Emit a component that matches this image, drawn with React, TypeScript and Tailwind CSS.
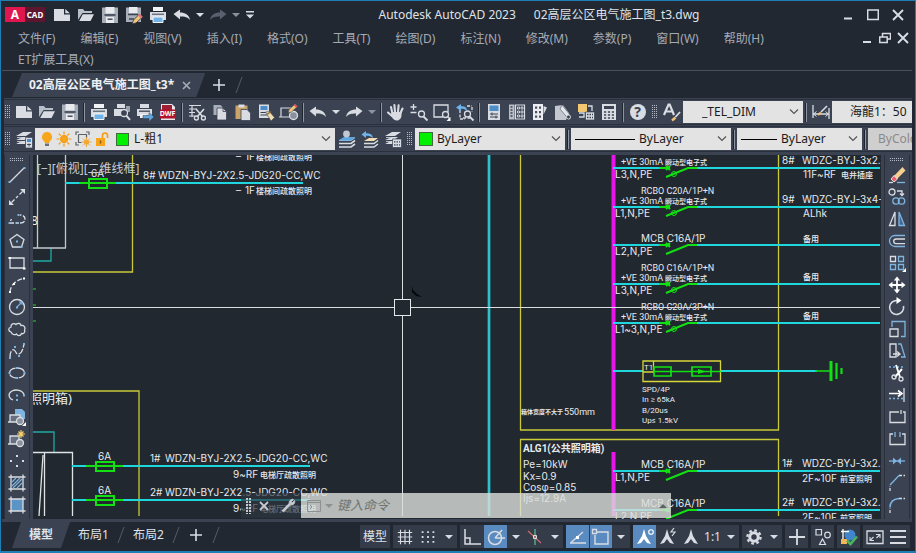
import React, { useState } from 'react';

type IconProps = { children: React.ReactNode; size?: number };

const Icon: React.FC<IconProps> = ({ children, size = 20 }) => (
  <svg width={size} height={size} viewBox="0 0 20 20" fill="none" stroke="#d9dde3" strokeWidth="1.3" className="shrink-0" aria-hidden="true">
    {children}
  </svg>
);

const L = '#d9dde3';
const B = '#7fb4e0';
const BG = '#3b4352';

/* ---------- file and edit icons ---------- */

const newIcon = <Icon><path d="M2 4h10v5.5h6V16H2z" fill={L} stroke="none" /><path d="M13.3 4l4.5 4.3h-4.5z" fill={L} stroke="none" /></Icon>;
const openIcon = (
  <Icon>
    <path d="M2 15V4h5l1.5 2H16v2H6.5z" fill="#b9bfc8" stroke="none" />
    <path d="M6.8 9.2H18L14.5 16H3.2z" fill={L} stroke="none" />
  </Icon>
);
const saveIcon = (
  <Icon>
    <path d="M2 2.5h16V18H2z" fill="#a9afb8" stroke="none" />
    <path d="M5.5 2h9v6.5h-9zM6 12h8v6H6z" fill="#e8eaee" stroke="none" />
    <path d="M4.5 10h11" stroke={BG} strokeWidth="1.6" />
    <path d="M7.6 14.2h5" stroke={BG} strokeWidth="1.4" />
  </Icon>
);
const saveAsIcon = (
  <Icon>
    <path d="M2 2.5h15V17H2z" fill="#a9afb8" stroke="none" />
    <path d="M5 2h8.5v6H5z" fill="#e8eaee" stroke="none" />
    <path d="M4 9.5h10M5 14h5" stroke={BG} strokeWidth="1.6" />
    <path d="M8 19l1.5-4L15 9.5l3 3L12 18z" fill="#f0c27a" stroke="#2a303b" strokeWidth=".8" />
    <path d="M14 10.4l1.8-1.7 3 3-1.7 1.7z" fill="#e8707a" stroke="none" />
  </Icon>
);
const printIcon = (
  <Icon>
    <path d="M5 2h10v4H5z" fill="#f1f3f5" stroke="none" />
    <path d="M2 7h16v8H2z" fill={L} stroke="none" />
    <path d="M4 9.2h12" stroke={BG} strokeWidth="1" />
    <path d="M5 12h10v5.5H5z" fill="#6fb3ea" stroke="#f1f3f5" strokeWidth="1" />
  </Icon>
);
const previewIcon = (
  <Icon>
    <path d="M2 7h13v7H2zM5 2h8v4H5z" fill={L} stroke="none" />
    <path d="M14 4h4v6h-4z" fill="#9aa1ac" stroke="none" />
    <circle cx="12" cy="11" r="3.5" fill={BG} stroke={L} />
    <path d="M14.5 13.8l3.5 4" strokeWidth="2" />
  </Icon>
);
const publishIcon = (
  <Icon>
    <path d="M5 2h9v4H5zM2 7h15v7H2z" fill={L} stroke="none" />
    <path d="M4 9.2h11" stroke={BG} />
    <path d="M5 12h6v4H5z" fill="#f1f3f5" stroke="none" />
    <path d="M8 13.5h6v-3l5 4.5-5 4.5v-3H8z" fill="#5da6e0" stroke={BG} strokeWidth=".5" />
  </Icon>
);
const dwfIcon = (
  <span className="relative flex h-5 w-5 items-center justify-center">
    <svg width="20" height="20" viewBox="0 0 20 20" aria-hidden="true">
      <path d="M3 2h11l3 3v13H3z" fill="#e6e8ec" />
      <path d="M4 3h10v5H4z" fill="#9d2035" />
      <path d="M2 7.5h16v9H2z" fill="#b3122d" />
    </svg>
    <span className="absolute inset-x-0 top-[7px] text-center text-[7px] leading-[10px] font-bold text-white">DWF</span>
  </span>
);
const cutIcon = (
  <Icon>
    <path d="M2 3.5h12M2 7h8M2 10.5h6M2 14h6M5 3v12" strokeWidth="1.2" />
    <path d="M9 7l7 8M17 7l-7 8" strokeWidth="1.6" />
    <circle cx="9.4" cy="16" r="2" /><circle cx="16.4" cy="16" r="2" />
  </Icon>
);
const copyIcon = (
  <Icon>
    <path d="M3.5 3h7l2 2v8h-9z" fill="#a9afb8" stroke="none" />
    <path d="M7 6h6l3.5 3.5V18H7z" fill={L} stroke={BG} strokeWidth=".8" />
    <path d="M13 6v3.5h3.5" stroke={BG} strokeWidth=".8" />
  </Icon>
);
const pasteIcon = (
  <Icon>
    <path d="M2.5 3.5h12V17h-12z" fill="#c9a36a" stroke="none" />
    <path d="M5.5 2.5h6v3h-6z" fill={L} stroke="none" />
    <path d="M8 7.5h6l3.5 3.5v7.5H8z" fill={L} stroke={BG} strokeWidth=".8" />
  </Icon>
);
const matchIcon = (
  <Icon>
    <path d="M3 2.5h10V16H3z" fill={L} stroke="none" />
    <path d="M4.5 4h7v4h-7z" fill="#4d8ec9" stroke="none" />
    <path d="M4.5 10.5h7M4.5 13h7" stroke={BG} strokeWidth="1" />
    <path d="M9.5 10l4-.5 5 6-3.5 3.5z" fill="#f3ddb0" stroke={BG} strokeWidth=".6" />
    <path d="M11 12.5l4-3" stroke="#8c6d3c" />
  </Icon>
);
const blockEditIcon = (
  <Icon>
    <path d="M2 6h11v9H2zM0 15h13" strokeWidth="1.2" />
    <circle cx="14.5" cy="13.5" r="4" fill="#8a929e" stroke={L} />
    <path d="M9 11l1-3.5L16 2l2.5 2.4-6 5.6z" fill="#f0c27a" stroke={BG} strokeWidth=".6" />
    <path d="M14.7 3.2L16.2 2l2.3 2.3-1.4 1.3z" fill="#e0525e" stroke="none" />
  </Icon>
);
const redoPath = 'M18.5 9L12 4.5v3c-5 0-9 2-10 7.5 2.5-3 5-3.5 10-3.5v3z';
const undoIcon = <Icon><path d="M1.5 9L8 4.5v3c5 0 9 2 10 7.5-2.5-3-5-3.5-10-3.5v3z" fill={L} stroke="none" /></Icon>;
const redoIcon = <Icon><path d={redoPath} fill={L} stroke="none" /></Icon>;
const redoDimIcon = <Icon><path d={redoPath} fill="#59616f" stroke="none" /></Icon>;

/* ---------- view icons ---------- */

const panIcon = (
  <Icon>
    <path d="M6.5 12L5 5M9 10l-.6-7M12 10l.6-6.600M14.5 11l2-4.5M6 14l-4-3.5" strokeWidth="2.1" strokeLinecap="round" />
    <path d="M5.5 10h10v3c0 3-2 5.5-4.5 5.5-2.5 0-4-1.5-5.5-4z" fill={L} stroke="none" />
  </Icon>
);
const zoomRealtimeIcon = (
  <Icon>
    <path d="M4.5 2v6M1.5 5h6M1.5 10.5h6" />
    <circle cx="12.5" cy="12" r="3" />
    <path d="M14.5 14.5l4 4" strokeWidth="1.8" />
  </Icon>
);
const zoomWindowIcon = (
  <Icon>
    <path d="M11 15H2V3h14v7" />
    <circle cx="13.5" cy="12.5" r="3" /><path d="M15.5 14.5l2 2" strokeWidth="1.6" />
    <path d="M18.5 15v4h-4z" fill="#fff" stroke="none" />
  </Icon>
);
const zoomPreviousIcon = (
  <Icon>
    <path d="M5 8v9h5M8 16h7M17 5v5M12 4h5" strokeDasharray="3 1.5" />
    <circle cx="12.5" cy="12" r="3" /><path d="M14.5 14.5l4 4" strokeWidth="1.8" />
    <path d="M1 5.5L6 2v2.2c4 0 6 1 6 5-1.5-2-3-2.5-6-2.5V9z" fill="#6fb3ea" stroke="none" />
  </Icon>
);
const propertiesIcon = (
  <Icon>
    <path d="M4 2h12v16H4z" fill={L} stroke="none" />
    <path d="M5.5 3.5h9V9h-9z" fill="#4d8ec9" stroke="none" />
    <path d="M6 12h8M6 15h8M8 10.5v3M12 13.5v3" stroke={BG} strokeWidth="1" />
  </Icon>
);
const designCenterIcon = (
  <Icon>
    <path d="M2 2.5h5.5v15H2z" fill="#b9bfc8" stroke="none" />
    <path d="M8.5 3h9v14h-9z" strokeWidth="1.2" />
    <path d="M3.5 5h2M3.5 8h2M3.5 11h2M3.5 14h2" stroke={BG} />
    <path d="M10.5 5h2v2h-2zM14 5h2v2h-2zM10.5 9h2v2h-2zM14 9h2v2h-2zM10.5 13h2v2h-2zM14 13h2v2h-2z" strokeWidth=".9" />
  </Icon>
);
const toolPaletteIcon = (
  <Icon>
    <path d="M3 2h10v16H3z" fill="#eceef1" stroke="none" />
    <path d="M13.5 4l3.5 1.5-3.5 7z" fill={L} stroke="none" />
    <path d="M5 4.5h2.2v2.2H5zM9 4.5h2v2.2H9zM5 9h2.2v2.2H5zM9 9h2v2.2H9zM5 13.5h2.2v2.2H5zM9 13.5h2v2.2H9z" fill="#4a5261" stroke="none" />
  </Icon>
);
const sheetSetIcon = (
  <Icon>
    <path d="M2 4l8-1 6 8-3 7H2z" fill="#c3c8d0" stroke="none" />
    <path d="M9 3l8 10c1.5 2 1 4-1 4.5L7 7z" fill="#e5e8ec" stroke="#5a6270" strokeWidth=".7" />
    <circle cx="15.5" cy="15" r="2" fill={BG} stroke={L} strokeWidth=".8" />
  </Icon>
);
const markupIcon = (
  <Icon>
    <path d="M2 2h9v8H2z" fill="#f3c672" stroke="none" />
    <path d="M3 11h5v4H3M12 4h4v5" stroke={L} />
    <path d="M9.5 10h9v8h-9z" fill={L} stroke={BG} strokeWidth=".7" />
    <path d="M11 12.5h6M11 15.5h6" stroke={BG} strokeDasharray="1.5 1" />
  </Icon>
);
const calcIcon = (
  <Icon>
    <path d="M3 2h14v16H3z" fill={L} stroke="none" />
    <path d="M5 4h10v3H5z" fill={BG} stroke="none" />
    <path d="M5 10h10M5 13h10M5 16h10" stroke={BG} strokeWidth="1.6" strokeDasharray="2.2 1.7" />
  </Icon>
);
const helpIcon = (
  <span className="flex h-4 w-4 items-center justify-center rounded-full bg-[#d9dde3] text-[14px] leading-4 font-bold text-[#3b4352]">?</span>
);
const textStyleIcon = (
  <Icon>
    <path d="M2 13L6.5 2.5h1.2L12 13M4 9.5h6.5" strokeWidth="2.2" />
    <path d="M10 18.5l3.5-3" stroke="#f0c27a" strokeWidth="2.4" /><path d="M13.5 15l4.5-5" strokeWidth="1.8" />
  </Icon>
);
const dimStyleIcon = (
  <Icon>
    <path d="M2 3v13M18 6v11M2 12h16" /><path d="M5.5 9.5L2.5 12l3 2.5M14.5 9.5l3 2.5-3 2.5" strokeWidth="1" />
    <path d="M7 13l3-2.5" stroke="#f0c27a" strokeWidth="2.2" /><path d="M10 10l6-6" strokeWidth="1.6" />
  </Icon>
);

/* ---------- layer icons ---------- */

const sheets = (
  <>
    <path d="M2 7l7-4h9l-6 4zM2 11l7-3h6l-4 3zM2 15l6-3h4l-1 3z" fill={L} stroke="none" />
    <path d="M3 8.5h8M3 12.5h6" strokeWidth=".8" />
  </>
);
const layerPropsIcon = (
  <Icon>
    {sheets}
    <path d="M11.5 8.5h7V19h-7z" fill={L} stroke={BG} strokeWidth=".7" />
    <path d="M13 10h4v3h-4z" fill="#4d8ec9" stroke="none" /><path d="M13 15.5h4M15 14.5v3" stroke={BG} strokeWidth=".9" />
  </Icon>
);
const layerCurrentIcon = (
  <Icon>
    <path d="M2 11l5-3h11l-4 3z" fill="#5da6e0" stroke="none" />
    <path d="M2 14.5h12l4-3M2 18h12l4-3" stroke={L} strokeWidth="1.6" />
    <path d="M2 11.5h12l4-3" stroke={B} strokeWidth="1.2" />
    <circle cx="9.5" cy="5" r="3.4" fill="#c3c8d0" stroke="none" />
  </Icon>
);
const layerPreviousIcon = (
  <Icon>
    <path d="M4 12l5-3h9l-4 3z" fill="#f3ddb0" stroke="none" />
    <path d="M4 14.5h10l4-3M4 18h10l4-3" strokeWidth="1.5" />
    <path d="M1.5 5.5L6 2v2.2c4 0 6.5 1 7 4.8-2-1.8-4-2.300-7-2.300V9z" fill="#6fb3ea" stroke="none" />
  </Icon>
);
const layerStateIcon = (
  <Icon>
    {sheets}
    <path d="M9.5 10h9v8.5h-9z" fill={L} stroke={BG} strokeWidth=".7" />
    <path d="M11 12.8h6M11 15.8h6" stroke={BG} strokeDasharray="1.5 1" />
  </Icon>
);
const bulbIcon = (
  <svg width="12" height="16" viewBox="0 0 12 16" aria-hidden="true">
    <path d="M6 1a5 5 0 0 1 3 9l-1 2H4l-1-2a5 5 0 0 1 3-9z" fill="#f7a51c" /><path d="M4 12.5h4V15H4z" fill="#6a6f78" />
  </svg>
);
const sunIcon = (
  <svg width="16" height="16" viewBox="0 0 16 16" stroke="#f59a13" strokeWidth="1.2" aria-hidden="true">
    <path d="M8 .5v3M8 12.5v3M.5 8h3M12.5 8h3M2.7 2.7l2 2M11.3 11.3l2 2M2.7 13.3l2-2M11.3 4.7l2-2" />
    <circle cx="8" cy="8" r="3.4" fill="#f7a51c" />
  </svg>
);
const viewportIcon = (
  <svg width="17" height="16" viewBox="0 0 17 16" fill="none" stroke="#5b616b" aria-hidden="true">
    <path d="M1 4V1h3M11 1h3v3M1 11v3h3M3.5 3.5h8v4M3.5 3.5v8h3" strokeWidth="1.2" />
    <path d="M11.5 6v10M6.5 11h10M8 7.5l7 7M15 7.5l-7 7" stroke="#e8a23a" strokeWidth=".9" />
    <circle cx="11.5" cy="11" r="2.6" fill="#f2a832" stroke="none" />
  </svg>
);
const lockIcon = (
  <svg width="14" height="16" viewBox="0 0 14 16" fill="none" aria-hidden="true">
    <path d="M7.5 8V4.5a2.5 2.5 0 0 1 5 0V7" stroke="#f59a13" strokeWidth="1.6" />
    <path d="M1 7h9v8H1z" fill="#f7a51c" /><path d="M5.5 9.5v3" stroke="#8c5a0c" strokeWidth="1.4" />
  </svg>
);

/* ---------- draw toolbar ---------- */

const drawTools = [
  { name: '直线', icon: <Icon><path d="M3 17L17 3" /><path d="M1.5 17h2M16.5 3h2" stroke={B} strokeWidth="2" /></Icon> },
  { name: '构造线', icon: <Icon><path d="M4.5 15.5l3-3M9 11l2-2M12.5 7.5l3-3" /><path d="M2 18v-5l5 5zM18 2v5l-5-5z" fill={L} stroke="none" /></Icon> },
  { name: '多段线', icon: <Icon><path d="M2 14h9M4.5 10l-1 2M13 14c4 0 5-2 5-4s-1.5-4-5-4" strokeDasharray="5 1.5" /><path d="M1.5 14h2M10 14h2M10.5 6h2" stroke={B} strokeWidth="2" /></Icon> },
  { name: '多边形', icon: <Icon><path d="M10 3.5l7 5L14.5 16h-9L3 8.5z" /><path d="M9 10.5h2M13.5 16h2" stroke={B} strokeWidth="2" /></Icon> },
  { name: '矩形', icon: <Icon><path d="M3 5h14v10H3z" /><path d="M1.5 5H4M16 15.5h2.5" stroke="#fff" strokeWidth="2.2" /></Icon> },
  { name: '圆弧', icon: <Icon><path d="M3 17c.5-7 6-12 14-13.5" strokeDasharray="5 2" /><path d="M2 17h2M6 9h2M16 3.5h2" stroke="#fff" strokeWidth="2" /></Icon> },
  { name: '圆', icon: <Icon><circle cx="10" cy="10" r="7.5" /><path d="M10 10l4.5-4.5M12 5h3v3" stroke={B} strokeWidth="1.1" /><path d="M9 10.5h2" stroke={B} strokeWidth="2" /></Icon> },
  { name: '修订云线', icon: <Icon><path d="M4 13c-3-1-3-4 0-5-.5-3 3-4.5 5-2.5 2-2 5-1 5 1 3-.5 5 2 3.5 4.5 1 2-1 4.5-3 3.5-1 3-4 2.5-5 .5-2 1.5-4.5.5-5.5-2z" /></Icon> },
  { name: '样条曲线', icon: <Icon><path d="M3 17c0-7 2-9 4-8s2 5 5 4 4-5 5-10" strokeDasharray="7 1.5" /><path d="M2 17h2M7 6h2M11 15h2M16 3h2" stroke={B} strokeWidth="2" /></Icon> },
  { name: '椭圆', icon: <Icon><ellipse cx="10" cy="10" rx="7.5" ry="5" strokeDasharray="8 2" /><path d="M1.5 10h2M9 5h2M16.5 10h2M9 15h2" stroke={B} strokeWidth="1.8" /></Icon> },
  { name: '椭圆弧', icon: <Icon><path d="M6 15C1 13 1 8 5 6c4-2 11-1 12 4" /><path d="M9 10.5h2M16 10.5h2M9 15h2" stroke={B} strokeWidth="2" /></Icon> },
  { name: '插入块', icon: <Icon><path d="M8 2h7l3 3v7H8z" fill={B} stroke="none" /><path d="M3 8h10v7H3zM1 15h12" fill="#667080" /><circle cx="13" cy="14" r="3.5" fill="#8a929e" /><path d="M19 15v4h-4z" fill="#fff" stroke="none" /></Icon> },
  { name: '创建块', icon: <Icon><path d="M3 7h9v8H3zM1 15h12" fill="#667080" /><circle cx="13" cy="14" r="3.5" fill="#8a929e" /><path d="M14 1v8M10 5h8M11.5 2.5l5 5M16.5 2.5l-5 5" stroke="#f6cf6b" strokeWidth="1.2" /></Icon> },
  { name: '点', icon: <Icon><path d="M9 5h2M3 10h2M15 10h2M9 15h2" strokeWidth="2.2" /></Icon> },
  { name: '图案填充', icon: <Icon><path d="M4 1.5v17M16 1.5v17M1.5 4h17M1.5 16h17" /><path d="M5 9l4-4M5 13l8-8M6 15l9-9M10 15l5-5" stroke={B} strokeWidth="1.2" /></Icon> },
  { name: '渐变色', icon: <Icon><path d="M4 4h12v12H4z" fill="#5d94c6" stroke="none" /><path d="M4 1.5v17M16 1.5v17M1.5 4h17M1.5 16h17" /></Icon> },
];

/* ---------- modify toolbar ---------- */

const modifyTools = [
  { name: '删除', icon: <Icon><path d="M6 12L15.5 2l3 3.5-9 9z" fill="#f6cf90" stroke="none" /><path d="M4 14l3-3.5 3.5 3.5L7 17z" fill="#e8606c" stroke="#fff" strokeWidth=".8" /><path d="M2 17.5h4" /><path d="M10 17.5h8" stroke={B} /></Icon> },
  { name: '复制', icon: <Icon><circle cx="5" cy="5" r="3" /><path d="M10 4h5v4M13 6.5l2 2 2-2" /><circle cx="9" cy="14" r="3.2" stroke={B} /><circle cx="14.5" cy="14" r="3.2" stroke={B} /></Icon> },
  { name: '镜像', icon: <Icon><path d="M8 3v13.5H2.5z" /><path d="M12 3v13.5h5.5z" stroke={B} fill="#456892" /></Icon> },
  { name: '偏移', icon: <Icon><path d="M18 4.5H8a5.5 5.5 0 0 0 0 11h10" stroke={B} /><path d="M18 8H9a2.3 2.3 0 0 0 0 4.6h9" /></Icon> },
  { name: '阵列', icon: <Icon><path d="M3.5 3.5h5v5h-5z" /><path d="M11.5 3.5h5v5h-5zM3.5 11.5h5v5h-5zM11.5 11.5h5v5h-5z" stroke={B} /><path d="M19 15v4h-4z" fill="#fff" stroke="none" /></Icon> },
  { name: '移动', icon: <Icon><path d="M10 4v12M4 10h12" strokeWidth="1.8" stroke="#fff" /><path d="M10 1.5l3.2 4H6.8zM10 18.5l3.2-4H6.8zM1.5 10l4-3.2v6.4zM18.5 10l-4-3.2v6.4z" fill="#fff" stroke="none" /></Icon> },
  { name: '旋转', icon: <Icon><path d="M16.5 9a7 7 0 1 1-6-5.5" strokeWidth="1.6" /><path d="M9.5 0l5 3.5-5 3.5z" fill="#fff" stroke="none" /></Icon> },
  { name: '缩放', icon: <Icon><path d="M3 10h8v7.5H3z" /><path d="M5 8V2.5h13v15h-4" stroke={B} /></Icon> },
  { name: '拉伸', icon: <Icon><path d="M3 3h6v13H3zM6 13h6M10 10.5l3 2.5-3 2.5" /><path d="M11 3h3l4 13h-4" stroke={B} /></Icon> },
  { name: '修剪', icon: <Icon><path d="M2 4h16" strokeDasharray="2 2" stroke={B} /><path d="M9 2l4 12M15 6l-7 8" strokeWidth="1.9" stroke="#fff" /><circle cx="7" cy="14" r="2" /><circle cx="14" cy="16" r="2" /></Icon> },
  { name: '延伸', icon: <Icon><path d="M17 3v14" /><path d="M2 8.5h11M11 5.5l4 3-4 3" strokeWidth="1.6" stroke="#fff" /><path d="M2 13.5h14" stroke={B} strokeDasharray="2 2" /></Icon> },
  { name: '打断于点', icon: <Icon><path d="M12 5H3v10.5h15V5h-2M14 3v4" /></Icon> },
  { name: '打断', icon: <Icon><path d="M6 5H3v10.5h15V5h-3" /><path d="M8 3v5M13 3v5" stroke={B} /></Icon> },
  { name: '合并', icon: <Icon><path d="M2 10h16" stroke={B} /><path d="M6 6.5l4 3.5-4 3.5zM14 6.5L10 10l4 3.5z" fill={B} stroke="none" /></Icon> },
  { name: '倒角', icon: <Icon><path d="M3 18v-5M12 2.5h6" strokeDasharray="3 1.5" /><path d="M3 12l9-9.5" stroke={B} /></Icon> },
  { name: '圆角', icon: <Icon><path d="M3 18v-5M12 3.5h6" strokeDasharray="3 1.5" /><path d="M3 12.5c0-5.5 3-8.5 9-9" stroke={B} strokeWidth="1.5" /></Icon> },
];

/* ---------- shared pieces ---------- */

type ToolProps = { label: string; children: React.ReactNode; className?: string };

const Tool: React.FC<ToolProps> = ({ label, children, className = 'w-[23px]' }) => (
  <button aria-label={label} className={`flex h-[22px] shrink-0 items-center justify-center hover:bg-white/10 ${className}`}>
    {children}
  </button>
);

const Caret = ({ label, dim = false, className = 'w-3' }: { label: string; dim?: boolean; className?: string }) => (
  <button aria-label={label} className={`flex h-[22px] shrink-0 items-center justify-center ${className}`}>
    <svg width="8" height="4" viewBox="0 0 8 4" aria-hidden="true"><path d="M0 0h8L4 4z" fill={dim ? '#8b929d' : '#d9dde3'} /></svg>
  </button>
);

const Sep = () => <span className="mx-[2px] h-[19px] w-[2px] shrink-0 border-l border-[#1f2530] bg-[#8f96a2]" />;

const Grip = ({ className = 'mr-[2px] ml-px' }: { className?: string }) => (
  <svg width="5" height="14" viewBox="0 0 5 14" stroke="#b4bac4" strokeDasharray="1 1" className={`shrink-0 ${className}`} aria-hidden="true">
    <path d="M.5 0v14M2.5 0v14M4.5 0v14" />
  </svg>
);

const Chevron = () => (
  <svg width="10" height="6" viewBox="0 0 10 6" fill="none" stroke="#555" strokeWidth="1.2" className="mr-1 shrink-0" aria-hidden="true">
    <path d="M1 .5l4 4 4-4" />
  </svg>
);

type ComboProps = { label: string; value: string; className: string; children?: React.ReactNode; selectClass?: string };

const Combo: React.FC<ComboProps> = ({ label, value, className, children, selectClass = 'pl-1' }) => (
  <div className={`flex h-[22px] items-center overflow-hidden bg-[#e3e3e3] pl-1 text-[12px] text-[#1a1a1a] ${className}`}>
    {children}
    <select aria-label={label} className={`h-full min-w-0 flex-1 appearance-none bg-transparent outline-none ${selectClass}`}>
      <option>{value}</option>
    </select>
    <Chevron />
  </div>
);

/* ---------- model space ---------- */

const GREEN = '#12e012';
const CYAN = '#1fd6dd';
const YELLOW = '#c9c93a';
const MAGENTA = '#e815e8';

// calt off keeps the plain "x" between digits
const cad = "font-['Inter','Liberation_Sans',sans-serif] text-[10px] [font-feature-settings:'calt'_0]";
const cadNarrow = "font-['Roboto','Liberation_Sans',sans-serif] text-[9px]";
const cadSmall = "font-['Roboto','Liberation_Sans',sans-serif] text-[8px]";
const hanzi = "font-['Noto_Sans_CJK_SC',sans-serif] text-[8px] font-medium";
const hanziSmall = "font-['Noto_Sans_CJK_SC',sans-serif] text-[7px] font-medium";
const hanziTiny = "font-['Noto_Sans_CJK_SC',sans-serif] text-[6px] font-bold";

type Circuit = { y: number; phase: string; breaker?: string; leakage?: boolean; no?: string; cable?: string };

const circuits: Circuit[] = [
  { y: 168, phase: 'L3,N,PE', leakage: true, no: '8#', cable: 'WDZC-BYJ-3x2.5' },
  { y: 207, phase: 'L1,N,PE', breaker: 'RCBO C20A/1P+N', leakage: true, no: '9#', cable: 'WDZC-BYJ-3x4-' },
  { y: 245, phase: 'L2,N,PE', breaker: 'MCB C16A/1P' },
  { y: 284, phase: 'L3,N,PE', breaker: 'RCBO C16A/1P+N', leakage: true },
  { y: 323, phase: 'L1~3,N,PE', breaker: 'RCBO C20A/3P+N', leakage: true },
  { y: 471, phase: 'L1,N,PE', breaker: 'MCB C16A/1P', no: '1#', cable: 'WDZC-BYJ-3x2.5' },
  { y: 510, phase: 'L2,N,PE', breaker: 'MCB C16A/1P', no: '2#', cable: 'WDZC-BYJ-3x2.5' },
];

const CircuitRow: React.FC<Circuit> = ({ y, phase, breaker, leakage, no, cable }) => (
  <g>
    <path d={`M613 ${y}h57M688 ${y}h192`} stroke={CYAN} strokeWidth="2" />
    <path d={`M659 ${y}h10M666 ${y - 2}l4 4m0-4l-4 4M666 ${y + 9}l22-9h9`} stroke={GREEN} strokeWidth="2" fill="none" />
    {leakage && <circle cx="674" cy={y + 6} r="2.5" stroke={GREEN} fill="none" />}
    {breaker && <text x="641" y={leakage ? y - 13 : y - 3} className={leakage ? cadNarrow : cad}>{breaker}</text>}
    {leakage && <text x="621" y={y - 3} className={cadNarrow}>+VE 30mA</text>}
    {leakage && <text x="665" y={y - 3} className={hanziSmall}>瞬动型电子式</text>}
    <text x="615" y={y + 10} className={cad}>{phase}</text>
    {no && <text x="782" y={y - 4} className={cad}>{no}</text>}
    {cable && <text x="802" y={y - 4} className={cad}>{cable}</text>}
  </g>
);

const FuseLine = ({ x, y, no }: { x: number; y: number; no: string }) => (
  <g>
    <path d={`M${x} ${y}h238`} stroke={CYAN} strokeWidth="2" />
    <path d={`M${x + 14} ${y}h37`} stroke={GREEN} strokeWidth="2" />
    <rect x={x + 24} y={y - 4} width="18" height="9" fill="none" stroke={GREEN} strokeWidth="2" />
    <text x={x + 26} y={y - 6} className={cad}>6A</text>
    <text x={x + 78} y={y - 4} className={cad}>{no}</text>
    <text x={x + 93} y={y - 4} className={cad}>WDZN-BYJ-2X2.5-JDG20-CC,WC</text>
  </g>
);

const ModelSpace = () => (
  <svg className="absolute inset-0 h-full w-full" fill="#e8ebee" aria-label="模型空间">
    <g transform="translate(-33 -155)">
      {/* upper left panel */}
      <path d="M132.5 155v117H33M139 516V391H33" stroke={YELLOW} strokeWidth="1.3" fill="none" />
      <path d="M33 261h18v-13M33 432h21v20" stroke="#1fa9a5" strokeWidth="1.3" fill="none" />
      <path d="M37.5 155v93M65.5 155v93M33 248h33" stroke="#c3c8cc" strokeWidth="1.3" />
      <path d="M33 289h3M33 305h3M33 321h3" stroke={GREEN} />
      <text x="31" y="225" className="text-[12px]">8</text>
      <FuseLine x={65} y={183} no="8#" />
      <text x="236" y="160" className={cad}>–</text>
      <text x="245" y="160" className={cad}>1F</text>
      <text x="256" y="160" className={hanzi}>楼梯间疏散照明</text>
      <text x="236" y="194" className={cad}>–</text>
      <text x="245" y="194" className={cad}>1F</text>
      <text x="256" y="194" className={hanzi}>楼梯间疏散照明</text>

      {/* lower left panel */}
      <text x="29" y="403" className="text-[13px]">照明箱)</text>
      <path d="M33 452.5h39.5V516M44.5 452v64M43 455l-4 61" stroke="#dfe3e6" strokeWidth="1.3" fill="none" />
      <FuseLine x={72} y={466} no="1#" />
      <FuseLine x={72} y={500} no="2#" />
      <text x="233" y="478" className={cad}>9~RF</text>
      <text x="260" y="478" className={hanzi}>电梯厅疏散照明</text>
      <text x="233" y="512" className={cad}>9~RF</text>
      <text x="260" y="512" className={hanzi}>电梯厅疏散照明</text>

      {/* riser and distribution boxes */}
      <path d="M489 155v361" stroke="#139ba6" strokeWidth="3" />
      <path d="M489 155v361" stroke="#5be3ea" />
      <path d="M520.5 155v275h258V155M520.5 516v-76.5h258V516" stroke={YELLOW} strokeWidth="1.3" fill="none" />
      <path d="M613.5 155v275M613.5 452v64" stroke={MAGENTA} strokeWidth="4" />
      {circuits.map((c) => <CircuitRow key={c.y} {...c} />)}
      <text x="803" y="178" className={cad}>11F~RF</text>
      <text x="841" y="178" className={hanzi}>电井插座</text>
      <text x="803" y="217" className={cad}>ALhk</text>
      <text x="803" y="242" className={hanzi}>备用</text>
      <text x="803" y="280" className={hanzi}>备用</text>
      <text x="803" y="319" className={hanzi}>备用</text>
      <text x="802" y="482" className={cad}>2F~10F</text>
      <text x="840" y="482" className={hanzi}>前室照明</text>
      <text x="802" y="521" className={cad}>2F~10F</text>
      <text x="840" y="521" className={hanzi}>前室照明</text>

      {/* surge protector */}
      <path d="M613 371h30M720 371h97" stroke={CYAN} strokeWidth="2" />
      <path d="M643 361h77.5v20.5H643zM653.5 361v11H643" stroke="#d8d838" strokeWidth="1.3" fill="none" />
      <text x="644" y="370" className={cadSmall}>T1</text>
      <path d="M654 371.5h67M654 367h17v9h-17zM692 367h19v9h-19zM815 371h16" stroke={GREEN} strokeWidth="1.7" fill="none" />
      <path d="M698 369l8 2.5-8 2.5z" fill={GREEN} />
      <path d="M831 361v20" stroke={GREEN} strokeWidth="3" />
      <path d="M836.5 363v16M841.5 368v6" stroke={GREEN} strokeWidth="2.2" />
      <text x="642" y="392" className={cadSmall}>SPD/4P</text>
      <text x="642" y="402" className={cadSmall}>In ≥ 65kA</text>
      <text x="642" y="413" className={cadSmall}>B/20us</text>
      <text x="642" y="423" className={cadSmall}>Up≤ 1.5kV</text>
      <text x="521" y="414" className={hanziTiny}>箱体宽度不大于</text>
      <text x="564" y="415" className={cadNarrow}>550mm</text>

      {/* ALG1 */}
      <text x="523" y="452" className="font-['Roboto','Noto_Sans_CJK_SC',sans-serif] text-[10px] font-bold">ALG1(公共照明箱)</text>
      <text x="523" y="468" className={cad}>Pe=10kW</text>
      <text x="523" y="480" className={cad}>Kx=0.9</text>
      <text x="523" y="491" className={cad}>Cosφ=0.85</text>
      <text x="523" y="502" className={cad}>Ijs=12.9A</text>

      {/* crosshair */}
      <path d="M412 286l1 4 4 4 5 3-6-1-4-4z" fill="#05070a" />
      <path d="M33 307.5h361M411 307.5h469M402.5 155v144M402.5 316v200" stroke="#d9dde0" />
      <rect x="394.5" y="299.5" width="16" height="16" fill="none" stroke="#e6e9ec" />
      <text x="37" y="173" className="text-[12px]" fill="#c8cdd2">[−][俯视][二维线框]</text>
    </g>
  </svg>
);

/* ---------- title and menus ---------- */

const menus = ['文件(F)', '编辑(E)', '视图(V)', '插入(I)', '格式(O)', '工具(T)', '绘图(D)', '标注(N)', '修改(M)', '参数(P)', '窗口(W)', '帮助(H)', 'ET扩展工具(X)'];

const WinButton: React.FC<ToolProps> = ({ label, children, className = 'w-6' }) => (
  <button aria-label={label} className={`flex h-5 items-center justify-center ${className}`}>
    <svg width="12" height="12" viewBox="0 0 12 12" fill="none" stroke="#d9dde3" strokeWidth="1.5" aria-hidden="true">{children}</svg>
  </button>
);

const TitleBar = () => (
  <header className="flex h-[27px] shrink-0 items-center pl-[3px]">
    <div className="mr-[5px] flex h-[15px] items-center bg-[#5d1630] font-bold text-white">
      <span className="w-5 bg-[#e0164f] text-center text-[12px] leading-[15px]">A</span>
      <span className="w-5 text-center text-[8px] leading-[15px]">CAD</span>
    </div>
    <Tool label="新建" className="w-6">{newIcon}</Tool>
    <Tool label="打开" className="w-6">{openIcon}</Tool>
    <Tool label="保存" className="w-6">{saveIcon}</Tool>
    <Tool label="另存为" className="w-6">{saveAsIcon}</Tool>
    <Tool label="打印" className="w-6">{printIcon}</Tool>
    <Tool label="放弃" className="w-6">{undoIcon}</Tool>
    <Caret label="放弃列表" />
    <Tool label="重做" className="w-6">{redoDimIcon}</Tool>
    <Caret label="重做列表" dim />
    <Tool label="自定义快速访问工具栏" className="w-4">
      <svg width="8" height="8" viewBox="0 0 8 8" aria-hidden="true"><path d="M0 0h8v1.5H0zM0 3.5h8l-4 4z" fill="#d9dde3" /></svg>
    </Tool>
    <h1 className="flex flex-1 justify-center gap-[18px] pr-4 text-[12px] text-[#dfe3e8]">
      <span>Autodesk AutoCAD 2023</span>
      <span>02高层公区电气施工图_t3.dwg</span>
    </h1>
    <div className="flex pr-[2px]">
      <WinButton label="最小化"><path d="M2 9.5h8" strokeWidth="2" /></WinButton>
      <WinButton label="最大化" className="w-[26px]"><path d="M.7 1h10.6v9.5H.7z" /></WinButton>
      <WinButton label="关闭"><path d="M1 1l10 10M11 1L1 11" strokeWidth="1.9" /></WinButton>
    </div>
  </header>
);

const MenuBar = () => (
  <div className="flex shrink-0 items-start border-b border-[#47505d]">
    <nav className="flex flex-1 flex-wrap gap-x-[25px] pl-4 text-[12px] text-[#a5abb4]">
      {menus.map((m) => (
        <button key={m} className="h-[21px] whitespace-nowrap">{m}</button>
      ))}
    </nav>
    <div className="flex">
      <WinButton label="最小化文档" className="w-[18px]"><path d="M2 10h8" strokeWidth="2" /></WinButton>
      <WinButton label="还原文档" className="w-[18px]"><path d="M.7 5h7.5v5.5H.7zM3.500 4.5v-3h8V7h-3" /></WinButton>
      <WinButton label="关闭文档" className="w-[18px]"><path d="M1 1l10 10M11 1L1 11" strokeWidth="1.9" /></WinButton>
    </div>
  </div>
);

const Slash = () => (
  <svg width="8" height="18" viewBox="0 0 8 18" stroke="#535b69" aria-hidden="true"><path d="M7 1L1 17" /></svg>
);

const FileTabs = () => (
  <div className="flex h-[27px] shrink-0 items-end pl-[10px] pb-px">
    <div className="flex h-6 items-center bg-[#3b4352] pr-3 pl-[17px] text-[12px] font-bold text-[#eef0f3] [clip-path:polygon(10px_0,100%_0,calc(100%-9px)_100%,0_100%)]">
      <span>02高层公区电气施工图_t3*</span>
      <button aria-label="关闭图形" className="ml-[6px] p-[2px]">
        <svg width="9" height="9" viewBox="0 0 9 9" stroke="#a5abb4" strokeWidth="1.7" aria-hidden="true"><path d="M1 1l7 7M8 1L1 8" /></svg>
      </button>
    </div>
    <button aria-label="新图形" className="mr-2 ml-[6px] flex h-6 w-4 items-center justify-center">
      <svg width="12" height="12" viewBox="0 0 12 12" stroke="#d9dde3" strokeWidth="1.6" aria-hidden="true"><path d="M6 0v12M0 6h12" /></svg>
    </button>
    <span className="pb-[3px]"><Slash /></span>
  </div>
);

const StandardToolbar = () => (
  <div className="flex h-[26px] shrink-0 items-center overflow-hidden border-y border-[#2a303c]">
    <Grip />
    <Tool label="新建">{newIcon}</Tool>
    <Tool label="打开">{openIcon}</Tool>
    <Tool label="保存">{saveIcon}</Tool>
    <Sep />
    <Tool label="打印">{printIcon}</Tool>
    <Tool label="打印预览">{previewIcon}</Tool>
    <Tool label="发布">{publishIcon}</Tool>
    <Tool label="三维 DWF">{dwfIcon}</Tool>
    <Sep />
    <Tool label="剪切">{cutIcon}</Tool>
    <Tool label="复制">{copyIcon}</Tool>
    <Tool label="粘贴">{pasteIcon}</Tool>
    <Tool label="特性匹配">{matchIcon}</Tool>
    <Tool label="块编辑器">{blockEditIcon}</Tool>
    <Sep />
    <Tool label="放弃" className="w-6">{undoIcon}</Tool>
    <Caret label="放弃列表" />
    <Tool label="重做" className="w-6">{redoIcon}</Tool>
    <Caret label="重做列表" dim />
    <Sep />
    <Tool label="实时平移">{panIcon}</Tool>
    <Tool label="实时缩放">{zoomRealtimeIcon}</Tool>
    <Tool label="窗口缩放">{zoomWindowIcon}</Tool>
    <Tool label="缩放上一个">{zoomPreviousIcon}</Tool>
    <Sep />
    <Tool label="特性">{propertiesIcon}</Tool>
    <Tool label="设计中心">{designCenterIcon}</Tool>
    <Tool label="工具选项板">{toolPaletteIcon}</Tool>
    <Tool label="图纸集管理器">{sheetSetIcon}</Tool>
    <Tool label="标记集管理器">{markupIcon}</Tool>
    <Tool label="快速计算器">{calcIcon}</Tool>
    <Sep />
    <Tool label="帮助">{helpIcon}</Tool>
    <Grip className="mx-[3px]" />
    <Tool label="文字样式">{textStyleIcon}</Tool>
    <Combo label="文字样式列表" value="_TEL_DIM" className="w-[120px] shrink-0" selectClass="pl-[15px]" />
    <Sep />
    <Tool label="标注样式">{dimStyleIcon}</Tool>
    <div className="flex h-[22px] min-w-0 flex-1 overflow-hidden bg-[#e3e3e3]">
      <select aria-label="标注样式列表" className="w-full appearance-none bg-transparent pl-[18px] text-[12px] text-[#1a1a1a] outline-none">
        <option>海龍1：50</option>
      </select>
    </div>
  </div>
);

const LayerToolbar = () => (
  <div className="mt-px flex h-[26px] shrink-0 items-center overflow-hidden border-y border-[#2a303c]">
    <Grip />
    <Tool label="图层特性">{layerPropsIcon}</Tool>
    <Combo label="图层" value="L-粗1" className="min-w-[180px] flex-1">
      <span className="flex shrink-0 items-center gap-[3px] pl-[2px]">
        {bulbIcon}{sunIcon}{viewportIcon}{lockIcon}
        <span className="mr-px ml-1 h-[13px] w-[13px] border border-[#3f6b3f] bg-[#00f000]" />
      </span>
    </Combo>
    <Tool label="将对象的图层置为当前">{layerCurrentIcon}</Tool>
    <Tool label="上一个图层">{layerPreviousIcon}</Tool>
    <Tool label="图层状态管理器">{layerStateIcon}</Tool>
    <Grip className="mx-[3px]" />
    <Combo label="颜色控制" value="ByLayer" className="w-[150px] shrink-0">
      <span className="h-[14px] w-[14px] shrink-0 border border-[#3f6b3f] bg-[#00f000]" />
    </Combo>
    <Sep />
    <Combo label="线型控制" value="ByLayer" className="w-[160px] shrink-0">
      <span className="h-px w-[60px] shrink-0 bg-black" />
    </Combo>
    <Sep />
    <Combo label="线宽控制" value="ByLayer" className="w-[125px] shrink-0">
      <span className="h-px w-9 shrink-0 bg-black" />
    </Combo>
    <Sep />
    <select aria-label="打印样式控制" disabled className="h-[22px] w-[44px] shrink-0 appearance-none overflow-hidden bg-[#cfcfcf] pl-[10px] text-[12px] text-[#8a8a8a]">
      <option>ByColor</option>
    </select>
  </div>
);

const SideToolbar = ({ tools, label }: { tools: typeof drawTools; label: string }) => (
  <div role="toolbar" aria-label={label} className="flex w-[26px] shrink-0 flex-col items-center overflow-hidden border-x border-[#2a303c] bg-[#3b4352]">
    <svg width="14" height="3" viewBox="0 0 14 3" stroke="#b4bac4" strokeDasharray="1 1" className="my-[3px] shrink-0" aria-hidden="true">
      <path d="M0 .5h14M0 2.5h14" />
    </svg>
    {tools.map((t) => <Tool key={t.name} label={t.name}>{t.icon}</Tool>)}
  </div>
);

const CommandLine = () => {
  const [command, setCommand] = useState('');
  return (
    <div className="absolute bottom-px left-[208px] flex h-[25px] w-[430px] items-center">
      <div className="flex h-full w-[60px] shrink-0 items-center gap-2 bg-[#2d343f]/70 pl-[5px]">
        <svg width="5" height="16" viewBox="0 0 5 16" stroke="#c5cad1" strokeWidth="2" strokeDasharray="2 1" aria-hidden="true">
          <path d="M1 0v16M4 0v16" />
        </svg>
        <button aria-label="关闭命令行">
          <svg width="10" height="10" viewBox="0 0 10 10" stroke="#c5cad1" strokeWidth="1.8" aria-hidden="true"><path d="M1 1l8 8M9 1L1 9" /></svg>
        </button>
        <button aria-label="自定义" className="ml-1">
          <svg width="15" height="15" viewBox="0 0 15 15" fill="none" stroke="#c5cad1" aria-hidden="true">
            <path d="M1.5 13.5L9 6" strokeWidth="2.6" /><path d="M12.5 1.5L10 4l1 1 2.5-2.5c1 2-.5 4.5-3 4.5S7.5 4 9 2.5s2.5-1.5 3.5-1z" fill="#c5cad1" strokeWidth=".8" />
          </svg>
        </button>
      </div>
      <div className="flex h-full flex-1 items-center bg-[#dcdedb]/80 pr-1 pl-[6px]">
        <svg width="14" height="12" viewBox="0 0 14 12" fill="none" stroke="#8c9191" aria-hidden="true"><path d="M.5.5h13v11H.5zM.5 2.5h13" /><path d="M3 5l2 2-2 2" /></svg>
        <svg width="8" height="4" viewBox="0 0 8 4" className="mx-1" aria-hidden="true"><path d="M0 0h8L4 4z" fill="#8c9191" /></svg>
        <input
          aria-label="命令"
          value={command}
          onChange={(e) => setCommand(e.target.value)}
          placeholder="键入命令"
          className="min-w-0 flex-1 bg-transparent text-[13px] italic outline-none placeholder:text-[#6f7472]"
        />
        <svg width="8" height="4" viewBox="0 0 8 4" aria-hidden="true"><path d="M0 4h8L4 0z" fill="#5f6463" /></svg>
      </div>
    </div>
  );
};

/* ---------- status bar ---------- */

const layouts = ['模型', '布局1', '布局2'];

const Group: React.FC<{ children: React.ReactNode }> = ({ children }) => (
  <div className="flex h-[23px] items-center bg-[#343c4a]">{children}</div>
);

const Status: React.FC<ToolProps & { on?: boolean }> = ({ label, children, on = false, className = 'w-[23px]' }) => (
  <button aria-label={label} aria-pressed={on} className={`flex h-[23px] items-center justify-center ${className} ${on ? 'bg-[#5a8bc0]' : ''}`}>
    {children}
  </button>
);

const StatusBar = () => {
  const [active, setActive] = useState('模型');
  return (
    <footer className="flex h-8 shrink-0 items-start border-t-[3px] border-[#3b4352] text-[12px] text-[#dfe3e8]">
      <div className="flex h-[26px] items-center pl-[10px]">
        {layouts.map((name) => (
          <React.Fragment key={name}>
            <button
              onClick={() => setActive(name)}
              className={
                active === name
                  ? 'h-[26px] bg-[#3b4352] px-[17px] font-bold [clip-path:polygon(9px_0,100%_0,calc(100%-9px)_100%,0_100%)]'
                  : 'h-[26px] px-2'
              }
            >
              {name}
            </button>
            {active !== name && <Slash />}
          </React.Fragment>
        ))}
        <button aria-label="新建布局" className="mx-1 flex h-6 w-6 items-center justify-center">
          <svg width="12" height="12" viewBox="0 0 12 12" stroke="#d9dde3" strokeWidth="1.6" aria-hidden="true"><path d="M6 0v12M0 6h12" /></svg>
        </button>
        <Slash />
      </div>
      <div className="mt-[3px] mr-[2px] ml-auto flex gap-[3px]">
        <Group><button className="h-[23px] w-[30px] text-[12px]">模型</button></Group>
        <Group>
          <Status label="栅格"><Icon size={18}><path d="M5 2v16M10 2v16M15 2v16M2 5h16M2 10h16M2 15h16" /></Icon></Status>
          <Status label="捕捉" className="w-6"><Icon size={18}><path d="M3 4.5h14M3 10h14M3 15.5h14" strokeWidth="2" strokeDasharray="2 4" /></Icon></Status>
          <Caret label="捕捉设置" className="w-[17px]" />
        </Group>
        <Group>
          <Status label="正交" className="w-6"><Icon><path d="M3 2v15h16M3 11h5v6" strokeWidth="1.5" /></Icon></Status>
          <Status label="极轴追踪" on><Icon><circle cx="9" cy="11" r="6.5" strokeWidth="1.5" /><path d="M9 11h10M9 11l7-8" strokeWidth="1.4" /></Icon></Status>
          <Caret label="极轴设置" className="w-[17px]" />
          <Status label="等轴测草图" className="w-[22px]"><Icon><path d="M10 2v16" stroke="#58b98a" /><path d="M3 4l13 12" stroke="#c96a6a" /><path d="M8.5 8.5h3v3h-3z" strokeWidth="1" /></Icon></Status>
          <Caret label="等轴测设置" className="w-[17px]" />
        </Group>
        <Group>
          <Status label="对象捕捉追踪" on><Icon><path d="M2 16h16M3 15.5L15 5" strokeWidth="1.5" /><path d="M8 9h3v3H8z" fill="#fff" stroke="none" /></Icon></Status>
          <Status label="对象捕捉" on className="ml-px w-[22px]"><Icon><path d="M6 5h11v12H4V8" strokeWidth="1.4" /><path d="M1.5 2.5h4v4h-4z" /></Icon></Status>
          <Caret label="对象捕捉设置" className="w-[18px]" />
        </Group>
        <Group>
          <Status label="注释可见性" on><Icon><path d="M9 2l2 7 5 8-4-1-3-4-3 4-4 1 5-8z" fill="#fff" stroke="none" /><circle cx="16" cy="5" r="2.3" stroke="#fff" strokeWidth="1.1" /></Icon></Status>
          <Status label="自动缩放"><Icon><path d="M9 2l2 7 5 8-4-1-3-4-3 4-4 1 5-8z" fill={L} stroke="none" /><path d="M16 1l-3 4h4l-3 4" strokeWidth="1.2" /></Icon></Status>
          <Status label="注释比例图标"><Icon><path d="M10 2l2 7 5 8-4-1-3-4-3 4-4 1 5-8z" fill={L} stroke="none" /></Icon></Status>
          <button className="h-[23px] w-[21px] text-[12px]">1:1</button>
          <Caret label="注释比例" className="w-[16px]" />
        </Group>
        <Group>
          <Status label="切换工作空间"><Icon size={18}><circle cx="10" cy="10" r="4.7" strokeWidth="3.4" /><circle cx="10" cy="10" r="7.3" strokeWidth="2.6" strokeDasharray="3 2.73" /></Icon></Status>
          <Caret label="工作空间" className="w-[17px]" />
        </Group>
        <Group><Status label="注释监视器"><Icon><path d="M10 2v16M2 10h16" strokeWidth="1.8" /></Icon></Status></Group>
        <Group><Status label="隔离对象"><Icon><path d="M3 2.5h5.5V8H3zM6.5 17.5h6l-3-5.500z" strokeWidth="1.2" /><circle cx="14.5" cy="8" r="2.8" strokeWidth="1.2" /></Icon></Status></Group>
        <Group>
          <Status label="图形性能">
            <Icon><circle cx="11" cy="8" r="5.5" fill="#3f86cc" stroke="none" /><path d="M4 2v12M2 4.5h8" stroke="#fff" /><path d="M2 12h6v5H2z" fill="#f3b65a" stroke="none" /><path d="M8 13.5l3.5 3.5L18 9.5" stroke="#4db35a" strokeWidth="2.6" /></Icon>
          </Status>
        </Group>
        <Group>
          <Status label="全屏显示"><Icon><path d="M2 4h16v12.5H2z" /><path d="M11 7.5h4V11M15 7.5L11.5 11M9 13.5H5V10M5 13.5L8.500 10" strokeWidth="1.1" /></Icon></Status>
          <Status label="自定义" className="w-6"><Icon><path d="M2 4h16M2 10h16M2 16h16" strokeWidth="2" /></Icon></Status>
        </Group>
      </div>
    </footer>
  );
};

const App: React.FC = () => {
  return (
    <div className="flex h-screen w-full flex-col overflow-hidden border border-b-2 border-[#1f7fb4] bg-[#222832] pr-[3px] pl-px font-['Noto_Sans','Noto_Sans_CJK_SC',sans-serif]">
      <TitleBar />
      <MenuBar />
      <FileTabs />
      <div className="ml-[2px] flex min-h-0 flex-1 flex-col bg-[#3b4352]">
        <div className="h-px shrink-0" />
        <StandardToolbar />
        <LayerToolbar />
        <div className="mt-[3px] flex min-h-0 flex-1 pr-[2px]">
          <SideToolbar tools={drawTools} label="绘图" />
          <main className="relative mx-[3px] min-w-0 flex-1 overflow-hidden bg-[#212830]">
            <ModelSpace />
            <CommandLine />
          </main>
          <SideToolbar tools={modifyTools} label="修改" />
        </div>
      </div>
      <StatusBar />
    </div>
  );
};

export default App;
